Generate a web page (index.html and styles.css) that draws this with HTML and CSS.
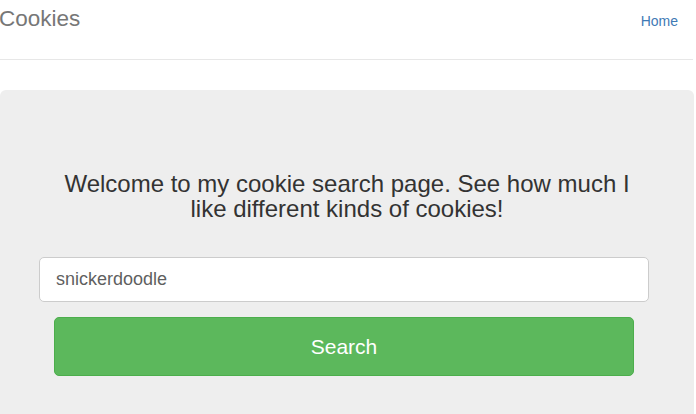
FILE: index.html
```html
<!DOCTYPE html>
<html>
<head>
<meta charset="utf-8">
<link rel="stylesheet" href="styles.css">
</head>
<body>
<header class="navbar">
  <a class="brand" href="#">Cookies</a>
  <a class="nav-link" href="#">Home</a>
</header>
<main class="jumbotron">
  <h1 class="lead">Welcome to my cookie search page. See how much I like different kinds of cookies!</h1>
  <form class="search">
    <input class="field" type="text" value="snickerdoodle">
    <button class="btn" type="button">Search</button>
  </form>
</main>
</body>
</html>
```
FILE: styles.css
```css
* { box-sizing: border-box; }
html, body { margin: 0; padding: 0; background: #fff; overflow: hidden; }
body { font-family: "Liberation Sans", Arial, sans-serif; color: #333; width: 696px; height: 414px; }
.navbar {
  display: flex;
  justify-content: space-between;
  align-items: flex-start;
  height: 60px;
  width: 693px;
  border-bottom: 1px solid #e7e7e7;
}
.brand {
  margin-left: -1px;
  margin-top: 6px;
  font-size: 22.5px;
  line-height: 26px;
  color: #777;
  text-decoration: none;
}
.nav-link {
  margin-top: 13px;
  margin-right: 15px;
  font-size: 14px;
  line-height: 16px;
  color: #3f7ab5;
  text-decoration: none;
}
.jumbotron {
  margin-top: 30px;
  width: 694px;
  height: 340px;
  background: #eee;
  border-radius: 6px;
  padding-top: 81px;
}
.lead {
  margin: 0 auto;
  width: 590px;
  text-align: center;
  font-weight: normal;
  font-size: 24px;
  line-height: 25px;
  color: #333;
}
.search {
  margin-top: 36px;
  padding-left: 39px;
  display: flex;
  flex-direction: column;
  align-items: flex-start;
}
.field {
  width: 610px;
  height: 45px;
  padding: 0 16px;
  font-family: "Liberation Sans", Arial, sans-serif;
  font-size: 18px;
  color: #5f5f5f;
  background: #fff;
  border: 1px solid #ccc;
  border-radius: 5px;
  outline: none;
}
.btn {
  margin-top: 15px;
  margin-left: 15px;
  width: 580px;
  height: 59px;
  font-family: "Liberation Sans", Arial, sans-serif;
  font-size: 21px;
  color: #fff;
  background: #5cb85c;
  border: 1px solid #4cae4c;
  border-radius: 5px;
}
```
